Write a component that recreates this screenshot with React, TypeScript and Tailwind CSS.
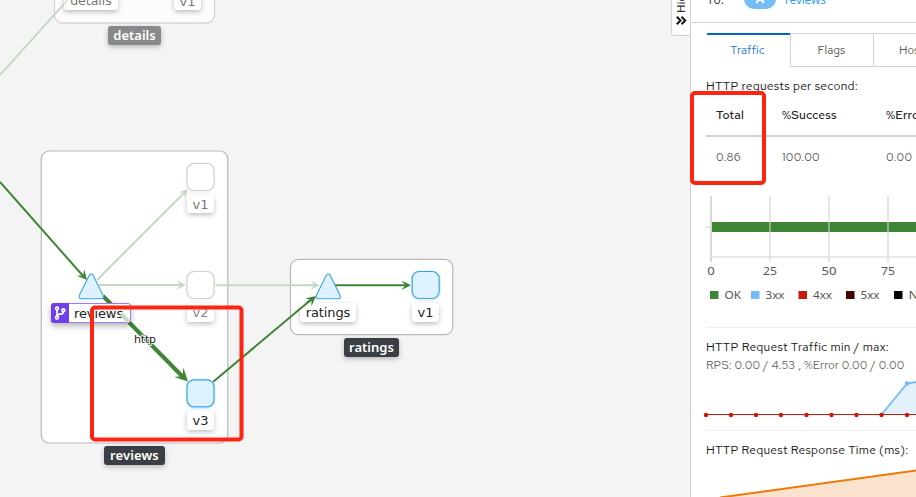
import type { ReactNode } from "react";

const RED = "#ff2312";
const GREEN = "#3e8635";

function Arrow({ x, y, angle, size = 1, faded = false }: { x: number; y: number; angle: number; size?: number; faded?: boolean }) {
  return (
    <path
      transform={`translate(${x} ${y}) rotate(${angle}) scale(${size})`}
      d="M0 0L-10 -5L-6 0L-10 5Z"
      fill={faded ? "#c3dac1" : GREEN}
    />
  );
}

function Triangle({ x, y }: { x: number; y: number }) {
  return (
    <path
      transform={`translate(${x} ${y})`}
      d="M-1.8 -11.2Q0 -13.4 1.8 -11.2L11.7 8.8Q13.2 12.4 9.8 12.4H-9.8Q-13.2 12.4 -11.7 8.8Z"
      fill="#def1ff"
      stroke="#39a5dc"
      strokeWidth="1.1"
    />
  );
}

function Node({ x, y, faded = false }: { x: number; y: number; faded?: boolean }) {
  return (
    <g>
      <rect x={x - 14.5} y={y - 14} width="29" height="29" rx="8" fill="none" stroke={faded ? "#f3f3f3" : "#cfeafa"} />
      <rect x={x - 13.5} y={y - 13.5} width="27" height="27" rx="7" fill={faded ? "#ffffff" : "#def1ff"} stroke={faded ? "#d1d1d1" : "#39a5dc"} strokeWidth="1.2" />
    </g>
  );
}

function Label({ className, children }: { className: string; children: ReactNode }) {
  return (
    <div className={`absolute flex items-center justify-center whitespace-nowrap rounded-[3px] leading-none shadow-[0_2px_5px_rgba(0,0,0,0.25)] ${className}`}>
      {children}
    </div>
  );
}

function Graph() {
  return (
    <div className="relative h-full w-[690px] shrink-0 bg-[#f4f4f4] font-['DejaVu_Sans',sans-serif]">
      <svg className="absolute inset-0" width="690" height="497">
        <rect x="54.5" y="-30" width="160" height="53" rx="8" fill="#fcfcfc" stroke="#d4d4d4" strokeWidth="1.3" />
        <rect x="41.3" y="151.0" width="186.5" height="292" rx="8" fill="#fff" stroke="#b8b8b8" strokeWidth="1.2" />
        <rect x="290.5" y="259.3" width="162.3" height="75.4" rx="8" fill="#fff" stroke="#b8b8b8" strokeWidth="1.2" />
        <g stroke="#c3dac1" strokeWidth="2">
          <path d="M97 280L186 191" />
          <path d="M99 285H182" />
          <path d="M215 285.3H316" />
        </g>
        <Arrow x={188} y={189} angle={-45} size={0.9} faded />
        <Arrow x={186} y={285} angle={0} size={0.95} faded />
        <Arrow x={320} y={285.3} angle={0} size={0.95} faded />
        <path d="M0 182L84 277M213 382L313 298M335 285.2H407" stroke={GREEN} strokeWidth="2" fill="none" />
        <Arrow x={87} y={280} angle={49} />
        <Arrow x={411} y={285.2} angle={0} size={0.95} />
        <path d="M103 296L183 377" stroke={GREEN} strokeWidth="4" />
        <Arrow x={188} y={381.5} angle={45} size={1.3} />
        <Triangle x={91.2} y={286.3} />
        <Triangle x={328.2} y={286.3} />
        <Node x={200.5} y={177} faded />
        <Node x={200.5} y={285} faded />
        <Node x={200.5} y={393.3} />
        <Node x={425.7} y={285} />
      </svg>

      <Label className="left-[64px] top-[-8px] h-[18px] w-[54px] bg-white text-[12.5px] text-[#777]">details</Label>
      <Label className="left-[174px] top-[-8px] h-[18px] w-[27px] bg-white text-[13px] text-[#777]">v1</Label>
      <Label className="left-[187px] top-[195px] h-[18px] w-[27px] bg-white text-[13px] text-[#777]">v1</Label>
      <Label className="left-[187px] top-[303px] h-[19px] w-[27px] bg-white text-[13px] text-[#888]">v2</Label>
      <Label className="left-[187px] top-[411px] h-[19px] w-[27px] bg-white text-[13px] text-[#222]">v3</Label>
      <Label className="left-[300px] top-[303px] h-[19px] w-[56px] bg-white text-[13px] tracking-[-0.1px] text-[#222]">ratings</Label>
      <Label className="left-[412px] top-[303px] h-[19px] w-[27px] bg-white text-[13px] text-[#222]">v1</Label>
      <div className="absolute left-[51px] top-[303px] flex h-[20px] w-[80px] items-center rounded-[3px] border border-[#9c7df0] bg-white shadow-[0_3px_6px_rgba(0,0,0,0.3)]">
        <div className="-ml-px flex h-[20px] w-[18px] shrink-0 items-center justify-center rounded-l-[3px] bg-[#703fec]">
          <svg width="12" height="14" viewBox="0 0 12 14" fill="none" stroke="white" strokeWidth="1.7">
            <circle cx="3" cy="2.4" r="1.4" />
            <circle cx="3" cy="11.6" r="1.4" />
            <circle cx="9.4" cy="4.2" r="1.4" />
            <path d="M3 4V10M9.4 5.5Q9.4 8 6.5 8.2Q3 8.4 3 10" />
          </svg>
        </div>
        <span className="ml-[5px] text-[13px] leading-none tracking-[-0.1px] text-[#222]">reviews</span>
      </div>
      <Label className="left-[108px] top-[26px] h-[19px] w-[53px] bg-[#87898b] font-['Noto_Sans',sans-serif] text-[13px] font-semibold text-white">details</Label>
      <Label className="left-[104px] top-[446px] h-[19px] w-[61px] bg-[#393f44] font-['Noto_Sans',sans-serif] text-[13px] font-semibold tracking-[0.1px] text-white">reviews</Label>
      <Label className="left-[344px] top-[338px] h-[19px] w-[55px] bg-[#393f44] font-['Noto_Sans',sans-serif] text-[13px] font-semibold text-white">ratings</Label>

      <svg className="absolute inset-0" width="690" height="497">
        <path d="M0 75L64 4" stroke="#bdd6bb" strokeWidth="1.8" />
        <path d="M64 4L69 -2" stroke="#d9e8d8" strokeWidth="2" />
        <path d="M121 314L129 322" stroke="#c8dcc5" strokeWidth="4" />
        <path d="M300 309L313 298" stroke={GREEN} strokeWidth="2" />
        <Arrow x={316} y={296} angle={-40} />
        <text x="134" y="343" fontFamily="DejaVu Sans, sans-serif" fontSize="11" textLength="22" fill="#222" stroke="#fff" strokeWidth="1.5" paintOrder="stroke">http</text>
        <rect x="92" y="307.5" width="149.5" height="132" rx="3" fill="none" stroke={RED} strokeWidth="4" />
      </svg>

      <div className="absolute bottom-[461px] right-0 flex h-[60px] w-[19px] flex-col items-center justify-end rounded-bl-[3px] border border-r-0 border-[#d2d2d2] bg-white pb-[10px]">
        <span className="mb-[3px] rotate-180 whitespace-nowrap font-['Noto_Sans',sans-serif] text-[11.5px] leading-[18px] text-[#333] [writing-mode:vertical-rl]">Hide</span>
        <svg width="11" height="9" viewBox="0 0 11 9" fill="none" stroke="#151515" strokeWidth="2">
          <path d="M0.8 0.8L4.5 4.5L0.8 8.2M5.5 0.8L9.2 4.5L5.5 8.2" />
        </svg>
      </div>
    </div>
  );
}

const legend = [
  { name: "OK", color: "#3e8635", x: 710, end: 16.5 },
  { name: "3xx", color: "#73bcf7", x: 751, end: 19 },
  { name: "4xx", color: "#c9190b", x: 798.5, end: 19 },
  { name: "5xx", color: "#470000", x: 846, end: 19 },
  { name: "NR", color: "#030303", x: 894, end: 18 },
];

function BarChart() {
  return (
    <svg className="block" width="225" height="122" viewBox="691 184 225 122" fontFamily="Noto Sans, sans-serif" fontSize="11.5" fill="#555">
      <rect x="711" y="222" width="205" height="10" fill={GREEN} />
      <path d="M705 227H711M711 257H916" stroke="#e8e8e8" strokeWidth="2" />
      <path d="M770 196V262M829 196V262M888 196V262" stroke="#d2d2d2" strokeOpacity=".55" strokeWidth="2" />
      <path d="M711 196V262" stroke="#d8d8d8" strokeWidth="2" />
      <g textAnchor="middle">
        <text x="711" y="275" textLength="7.5" lengthAdjust="spacingAndGlyphs">0</text>
        <text x="770" y="275" textLength="14" lengthAdjust="spacingAndGlyphs">25</text>
        <text x="829" y="275" textLength="15" lengthAdjust="spacingAndGlyphs">50</text>
        <text x="888" y="275" textLength="14" lengthAdjust="spacingAndGlyphs">75</text>
      </g>
      {legend.map((l) => (
        <g key={l.name}>
          <rect x={l.x} y="291" width="8.5" height="8" fill={l.color} />
          <text x={l.x + 14.5} y="299" textLength={l.end} lengthAdjust="spacingAndGlyphs">{l.name}</text>
        </g>
      ))}
    </svg>
  );
}

const points = [706, 731, 756, 781, 806.5, 831.5, 856.5, 881.5, 907];

function Sparkline() {
  return (
    <svg className="block" width="225" height="51" viewBox="691 376 225 51">
      <path d="M882 414L907 383.5L916 382V414Z" fill="#e3f1fd" />
      <path d="M882 414L907 383.5L916 382" fill="none" stroke="#73bcf7" strokeWidth="1.8" />
      <circle cx="907" cy="383.5" r="2.2" fill="#73bcf7" />
      <path d="M706 414.5H916" stroke="#c9190b" />
      {points.map((p) => <circle key={p} cx={p} cy="415" r="2.2" fill="#c9190b" />)}
    </svg>
  );
}

function SidePanel() {
  return (
    <div className="relative h-full w-[226px] shrink-0 overflow-hidden border-l border-[#d2d2d2] bg-white font-['Red_Hat_Text',Inter,sans-serif] text-[12px] text-[#555]">
      <div className="flex h-[23px] items-start border-b border-[#d2d2d2] pl-[16px]">
        <span className="-mt-[8px] w-[37px] font-['Open_Sans',sans-serif] text-[12px] leading-[16px] text-[#333]">To:</span>
        <span className="-mt-[11px] flex h-[20px] w-[32px] items-center justify-center rounded-full bg-[#73bcf7] text-[12px] font-bold text-white">A</span>
        <span className="-mt-[8px] ml-[9px] font-['Open_Sans',sans-serif] text-[12px] leading-[16px] tracking-[-0.3px] text-[#2b9af3]">reviews</span>
      </div>
      <div className="mt-[10px] flex h-[34px] w-[300px] pl-[16px]">
        <div className="flex w-[83px] items-center justify-center border-t-2 border-[#06c] pr-[2px] text-[11.5px] tracking-[0.2px] text-[#1673cf]">Traffic</div>
        <div className="flex w-[84px] items-center justify-center border border-[#d2d2d2] pr-[1px] pt-[2px] text-[11.5px] tracking-[0.1px]">Flags</div>
        <div className="flex w-[83px] items-center border-y border-[#d2d2d2] pl-[25px] pt-[2px] text-[11.5px] tracking-[0.1px]">Hosts</div>
      </div>
      <div className="ml-[15px] mt-[11px] h-[16px] whitespace-nowrap text-[12px] leading-[16px] tracking-[0.25px] text-[#151515]">HTTP requests per second:</div>
      <div className="ml-[15px] grid h-[43px] w-[280px] grid-cols-[66px_104px_1fr] items-center border-b-2 border-[#d2d2d2] pl-[10px] pt-px text-[12px] font-medium tracking-[0.15px] text-[#222]">
        <span>Total</span><span>%Success</span><span>%Error</span>
      </div>
      <div className="ml-[15px] grid h-[47px] w-[280px] grid-cols-[66px_104px_1fr] items-center pb-[5px] pl-[10px] text-[11.5px] tracking-[0.3px]">
        <span>0.86</span><span>100.00</span><span>0.00</span>
      </div>
      <BarChart />
      <div className="ml-[15px] mt-[21px] border-t border-[#eee] pt-[11px] text-[#151515]">
        <div className="whitespace-nowrap leading-[16px] tracking-[0.26px]">HTTP Request Traffic min / max:</div>
        <div className="mt-[2px] whitespace-nowrap text-[11.5px] leading-[16px] tracking-[0.15px] text-[#666]">RPS: 0.00 / 4.53 , %Error 0.00 / 0.00</div>
      </div>
      <div className="mt-[3px]"><Sparkline /></div>
      <div className="ml-[15px] mt-[3px] border-t border-[#eee] pt-[11px]">
        <div className="whitespace-nowrap leading-[16px] tracking-[0.25px] text-[#151515]">HTTP Request Response Time (ms):</div>
      </div>
      <svg className="mt-[9px] block" width="225" height="30" viewBox="691 467 225 30">
        <path d="M720 497L916 470.5V497Z" fill="#fae2cf" />
        <path d="M720 497.5L916 470.5" stroke="#ec7a08" strokeWidth="2" />
      </svg>
    </div>
  );
}

export default function App() {
  return (
    <div className="relative flex h-[497px] w-[916px] overflow-hidden">
      <Graph />
      <SidePanel />
      <div className="absolute left-[690px] top-[91px] h-[94px] w-[76px] rounded-[5px] border-4 border-[#ff2312]" />
    </div>
  );
}
